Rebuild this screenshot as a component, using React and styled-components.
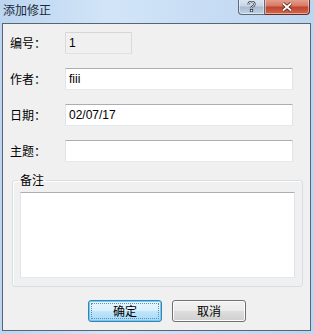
import styled, { createGlobalStyle } from "styled-components";

const GlobalStyle = createGlobalStyle`
    html, body {
        margin: 0;
        padding: 0;
        background: #c4dbf3;
    }
    * {
        box-sizing: border-box;
    }
`;

const FONT = `"Noto Sans CJK SC", "Liberation Sans", sans-serif`;

const Window = styled.div`
    width: 314px;
    height: 334px;
    display: flex;
    flex-direction: column;
    background: linear-gradient(to right, #bcd5f0 0%, #d2e5f8 35%, #c9def5 60%, #bcd5f0 100%);
    font-family: ${FONT};
    font-size: 12px;
    color: #000;
`;

const TitleBar = styled.div`
    height: 23px;
    display: flex;
    align-items: flex-start;
    justify-content: space-between;
    padding-left: 3px;
    padding-right: 4px;
`;

const Title = styled.div`
    margin-top: 2px;
    font-size: 12px;
    line-height: 16px;
    color: #1a2a3a;
`;

const CaptionGroup = styled.div`
    display: flex;
    height: 16px;
    margin-top: -1px;
`;

const CaptionButton = styled.div`
    width: ${({ $w }) => $w}px;
    height: 100%;
    display: flex;
    align-items: center;
    justify-content: center;
    border: 1px solid ${({ $close }) => ($close ? "#6b2a22" : "#5d6a7b")};
    border-top: none;
    border-left: ${({ $close }) => ($close ? "none" : undefined)};
    border-radius: ${({ $close }) => ($close ? "0 0 4px 0" : "0 0 0 4px")};
    background: ${({ $close }) =>
        $close
            ? "linear-gradient(#e8a493 0%, #d47a66 45%, #c2442c 55%, #cf6a4f 100%)"
            : "linear-gradient(#dde7f2 0%, #c8d6e6 45%, #a9bbd1 55%, #c3d2e3 100%)"};
    box-shadow: inset 0 0 0 1px rgba(255, 255, 255, 0.45);
`;

const Client = styled.div`
    flex: 1;
    margin: 0 3px 3px 2px;
    border: 1px solid #5a6573;
    background: #f0f0f0;
    display: flex;
    flex-direction: column;
    padding: 8px 17px 8px 7px;
`;

const FieldGrid = styled.div`
    display: grid;
    grid-template-columns: 55px 1fr;
    row-gap: 14px;
    align-items: center;
`;

const Label = styled.div`
    line-height: 22px;
    font-size: 12px;
`;

const TextBox = styled.div`
    height: 22px;
    width: ${({ $width }) => ($width ? `${$width}px` : "auto")};
    border: 1px solid;
    border-color: ${({ $readOnly }) =>
        $readOnly ? "#d6d6d6 #dadada #e1e1e1 #dadada" : "#abadb3 #e2e3ea #e3e9ef #e2e3ea"};
    border-radius: 1px;
    background: ${({ $readOnly }) => ($readOnly ? "#f0f0f0" : "#ffffff")};
    padding: 0 3px;
    font-family: "Liberation Sans", sans-serif;
    font-size: 12px;
    line-height: 20px;
    color: #000;
`;

const Group = styled.fieldset`
    margin: 12px 0 0 2px;
    margin-right: -10px;
    padding: 6px 7px 8px 7px;
    border: 1px solid #d5dfe5;
    border-radius: 3px;
    box-shadow: inset 1px 1px 0 #ffffff;
`;

const Legend = styled.legend`
    margin-left: -2px;
    padding: 0 2px;
    font-size: 12px;
    line-height: 12px;
`;

const Memo = styled.div`
    height: 86px;
    background: #ffffff;
    border: 1px solid;
    border-color: #abadb3 #e2e3ea #e3e9ef #e2e3ea;
    border-radius: 1px;
`;

const ButtonRow = styled.div`
    display: flex;
    gap: 10px;
    margin-top: 13px;
    padding-left: 78px;
`;

const Button = styled.div`
    width: 74px;
    height: 22px;
    border: 1px solid ${({ $default }) => ($default ? "#3c7fb1" : "#707070")};
    border-radius: 3px;
    background: ${({ $default }) =>
        $default
            ? "linear-gradient(#eaf6fd 0%, #d9f0fc 48%, #bee6fd 52%, #a7d9f5 100%)"
            : "linear-gradient(#f2f2f2 0%, #ebebeb 48%, #dddddd 52%, #cfcfcf 100%)"};
    box-shadow: inset 0 0 0 1px ${({ $default }) => ($default ? "#6ecdf4" : "#fcfcfc")};
    display: flex;
    align-items: center;
    justify-content: center;
    position: relative;
    font-size: 12px;
    line-height: 14px;

    &::after {
        content: "";
        display: ${({ $default }) => ($default ? "block" : "none")};
        position: absolute;
        inset: 2px;
        border: 1px dotted #5a8fb8;
    }
`;

const App = () => {
    return (
        <Window>
            <GlobalStyle />
            <TitleBar>
                <Title>添加修正</Title>
                <CaptionGroup>
                    <CaptionButton $w={27}>
                        <svg width="9" height="11" viewBox="0 0 9 11">
                            <path
                                d="M1.5 3.5 Q1.5 1 4.5 1 Q7.5 1 7.5 3.3 Q7.5 4.8 5.5 5.6 Q4.5 6 4.5 7.3"
                                fill="none"
                                stroke="#2b3440"
                                strokeWidth="2.2"
                            />
                            <path
                                d="M1.5 3.5 Q1.5 1 4.5 1 Q7.5 1 7.5 3.3 Q7.5 4.8 5.5 5.6 Q4.5 6 4.5 7.3"
                                fill="none"
                                stroke="#ffffff"
                                strokeWidth="1"
                            />
                            <rect x="3.3" y="8.4" width="2.4" height="2.4" fill="#ffffff" stroke="#2b3440" strokeWidth="0.8" />
                        </svg>
                    </CaptionButton>
                    <CaptionButton $w={45} $close>
                        <svg width="12" height="10" viewBox="0 0 12 10">
                            <path d="M2 1.5 L10 8.5 M10 1.5 L2 8.5" stroke="#4a1a12" strokeWidth="3.4" />
                            <path d="M2 1.5 L10 8.5 M10 1.5 L2 8.5" stroke="#ffffff" strokeWidth="1.8" />
                        </svg>
                    </CaptionButton>
                </CaptionGroup>
            </TitleBar>
            <Client>
                <FieldGrid>
                    <Label>编号：</Label>
                    <TextBox $readOnly $width={67}>1</TextBox>
                    <Label>作者：</Label>
                    <TextBox>fiii</TextBox>
                    <Label>日期：</Label>
                    <TextBox>02/07/17</TextBox>
                    <Label>主题：</Label>
                    <TextBox />
                </FieldGrid>
                <Group>
                    <Legend>备注</Legend>
                    <Memo />
                </Group>
                <ButtonRow>
                    <Button $default>确定</Button>
                    <Button>取消</Button>
                </ButtonRow>
            </Client>
        </Window>
    );
};

export default App;
